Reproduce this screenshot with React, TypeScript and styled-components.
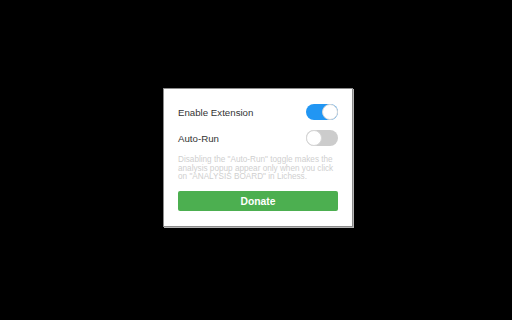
import React, { useState } from "react";
import styled, { createGlobalStyle } from "styled-components";

const GlobalStyle = createGlobalStyle`
  html, body {
    margin: 0;
    padding: 0;
    background: #000;
    width: 512px;
    height: 320px;
    overflow: hidden;
  }
  body {
    font-family: "Liberation Sans", Arial, sans-serif;
  }
`;

const Stage = styled.div`
  width: 512px;
  height: 320px;
  box-sizing: border-box;
  padding: 88px 0 0 163px;
  background: #000;
`;

const Popup = styled.div`
  width: 190px;
  box-sizing: border-box;
  background: #fff;
  border: 1px solid #8c8c8c;
  box-shadow: 1px 1px 0 #b4b4b4;
  padding: 15px 14px 15px 14px;
  display: flex;
  flex-direction: column;
`;

const Row = styled.div<{ $gap?: number }>`
  display: flex;
  align-items: center;
  justify-content: space-between;
  height: 16px;
  margin-bottom: ${(p) => p.$gap ?? 0}px;
`;

const Label = styled.span`
  font-size: 9.7px;
  color: #333;
  line-height: 16px;
  padding-top: 1px;
`;

const Track = styled.button<{ $on: boolean }>`
  position: relative;
  width: 32px;
  height: 16px;
  border-radius: 8px;
  border: none;
  padding: 0;
  margin: 0;
  cursor: pointer;
  background: ${(p) => (p.$on ? "#2196f3" : "#cccccc")};
`;

const Knob = styled.span<{ $on: boolean }>`
  position: absolute;
  top: 0;
  left: ${(p) => (p.$on ? "16px" : "0")};
  width: 16px;
  height: 16px;
  box-sizing: border-box;
  border-radius: 50%;
  background: #fff;
  border: 1px solid #d6d6d6;
`;

const Note = styled.p`
  margin: 10px 0 9px 0;
  width: 160px;
  font-size: 8.2px;
  line-height: 8.7px;
  color: #cfcfcf;
  white-space: nowrap;
`;

const DonateButton = styled.button`
  width: 160px;
  height: 20px;
  border: none;
  border-radius: 2px;
  background: #4caf50;
  color: #fff;
  font-family: "Liberation Sans", Arial, sans-serif;
  font-weight: bold;
  font-size: 10.3px;
  padding: 0;
  cursor: pointer;
`;

function Toggle({ on, onClick }: { on: boolean; onClick: () => void }) {
  return (
    <Track $on={on} onClick={onClick} aria-pressed={on}>
      <Knob $on={on} />
    </Track>
  );
}

export default function App() {
  const [enabled, setEnabled] = useState(true);
  const [autoRun, setAutoRun] = useState(false);
  return (
    <>
      <GlobalStyle />
      <Stage>
        <Popup>
          <Row $gap={10}>
            <Label>Enable Extension</Label>
            <Toggle on={enabled} onClick={() => setEnabled(!enabled)} />
          </Row>
          <Row>
            <Label>Auto-Run</Label>
            <Toggle on={autoRun} onClick={() => setAutoRun(!autoRun)} />
          </Row>
          <Note>
            Disabling the "Auto-Run" toggle makes the
            <br />
            analysis popup appear only when you click
            <br />
            on "ANALYSIS BOARD" in Lichess.
          </Note>
          <DonateButton>Donate</DonateButton>
        </Popup>
      </Stage>
    </>
  );
}
